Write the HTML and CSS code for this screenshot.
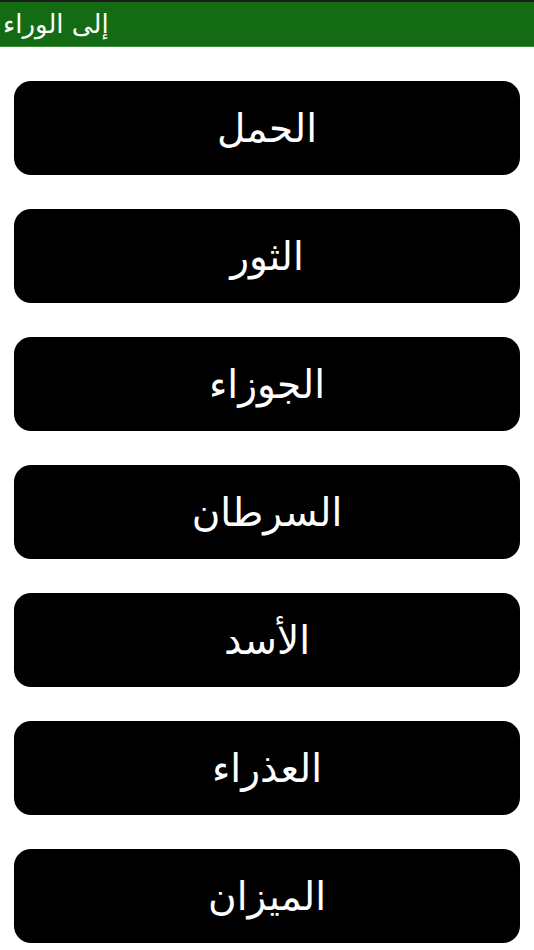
FILE: index.html
```html
<!DOCTYPE html>
<html lang="ar">
<head>
<meta charset="utf-8">
<link rel="stylesheet" href="styles.css">
</head>
<body>
<header class="topbar"><span class="back">إلى الوراء</span></header>
<main class="list">
  <div class="sign">الحمل</div>
  <div class="sign">الثور</div>
  <div class="sign">الجوزاء</div>
  <div class="sign">السرطان</div>
  <div class="sign">الأسد</div>
  <div class="sign">العذراء</div>
  <div class="sign">الميزان</div>
</main>
</body>
</html>
```
FILE: styles.css
```css
html, body {
  margin: 0;
  padding: 0;
  background: #ffffff;
  font-family: "DejaVu Sans", "Noto Sans", sans-serif;
}
.topbar {
  height: 44px;
  background: #136b13;
  border-top: 2px solid #1a1a1a;
  border-bottom: 1px solid #3f8f3f;
  display: flex;
  align-items: center;
  padding-left: 3px;
}
.back {
  color: #ffffff;
  font-size: 26px;
  direction: rtl;
  line-height: 1;
}
.list {
  display: flex;
  flex-direction: column;
  gap: 34px;
  padding: 34px 14px 0 14px;
}
.sign {
  height: 94px;
  background: #000000;
  border-radius: 17px;
  color: #ffffff;
  font-size: 39px;
  display: flex;
  align-items: center;
  justify-content: center;
  direction: rtl;
}
```
